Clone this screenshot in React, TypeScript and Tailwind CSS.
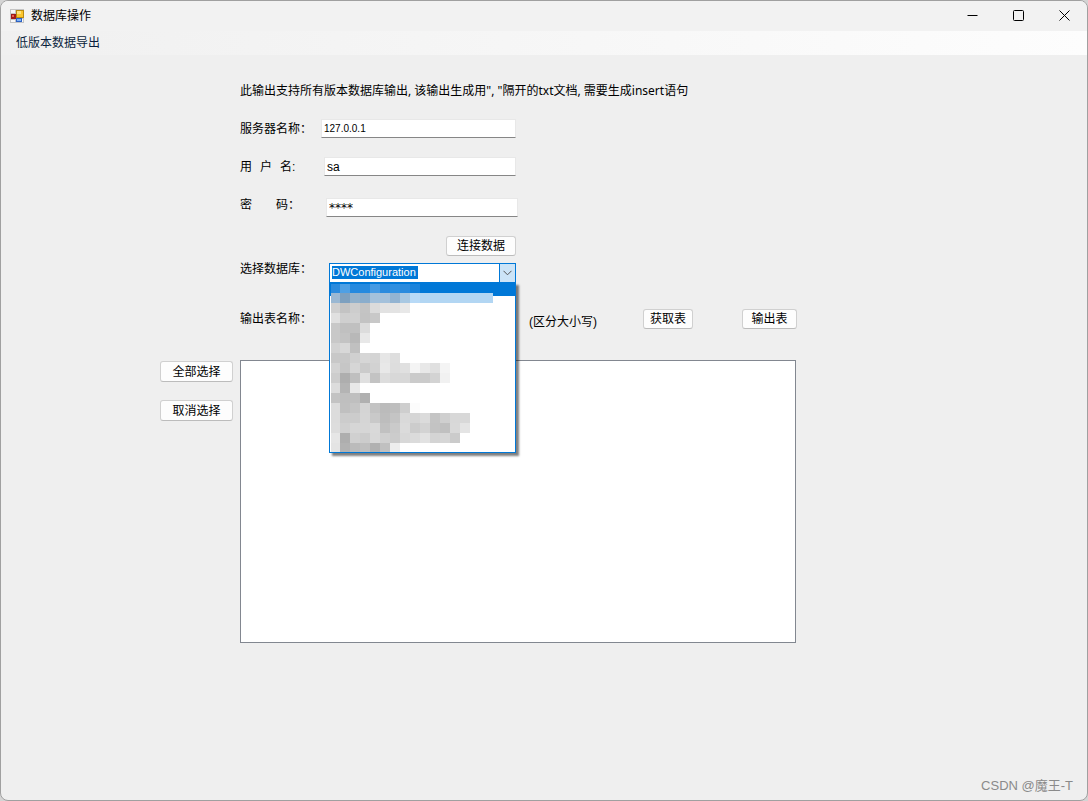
import { useState } from 'react';

const CELL = 10;

// blurred database names, one array per row of the drop down list
const mosaicRows: string[][] = [
  ['#2b8bdd', '#4fa0e4', '#258adf', '#258adf', '#459ae3', '#2a8bde', '#3090e0', '#2a8bde', '#1b84dc'],
  ['#9ab8d3', '#7da0bf', '#92b1cb', '#8aadcc', '#a4c1db', '#a4c1db', '#93b4d2', '#a8c8e2', '#b8daf7'],
  ['#d0d0d0', '#c3c3c3', '#cdcdcd', '#c4c4c4', '#dbdbdb', '#e2e2e2', '#e3e3e3', '#e8e8e8'],
  ['#e0e0e0', '#cfcfcf', '#d0d0d0', '#c3c3c3', '#c8c8c8'],
  ['#c8c8c8', '#c0c0c0', '#c0c0c0', '#dcdcdc'],
  ['#c8c8c8', '#c3c3c3', '#b8b8b8', '#e8e8e8'],
  ['#d2d2d2', '#d8d8d8', '#c0c0c0'],
  ['#c8c8c8', '#c8c8c8', '#d0d0d0', '#d6d6d6', '#d4d4d4', '#e6e6e6', '#dedede'],
  ['#d3d3d3', '#c6c6c6', '#d6d6d6', '#cbcbcb', '#d2d2d2', '#e8e8e8', '#dddddd', '#e0e0e0', '#f4f4f4', '#e8e8e8', '#e0e0e0', '#f4f4f4'],
  ['#cdcdcd', '#aeaeae', '#bfbfbf', '#e0e0e0', '#c3c3c3', '#dddddd', '#d8d8d8', '#d8d8d8', '#cbcbcb', '#cbcbcb', '#d3d3d3', '#f1f1f1'],
  ['#dcdcdc', '#b4b4b4', '#e8e8e8'],
  ['#c3c3c3', '#bfbfbf', '#bfbfbf', '#b0b0b0'],
  ['#dcdcdc', '#c0c0c0', '#c5c5c5', '#d4d4d4', '#c3c3c3', '#bbbbbb', '#bebebe', '#cecece', '#fcfcfc'],
  ['#dcdcdc', '#cccccc', '#cccccc', '#d5d5d5', '#c9c9c9', '#bdbdbd', '#c4c4c4', '#d9d9d9', '#d5d5d5', '#dbdbdb', '#c4c4c4', '#cfcfcf', '#d8d8d8', '#d8d8d8'],
  ['#dddddd', '#d0d0d0', '#d6d6d6', '#d6d6d6', '#d9d9d9', '#c1c1c1', '#cacaca', '#dbdbdb', '#cccccc', '#d3d3d3', '#c3c3c3', '#c0c0c0', '#d9d9d9', '#e4e4e4'],
  ['#e6e6e6', '#aeaeae', '#d0d0d0', '#cccccc', '#d8d8d8', '#d0d0d0', '#cccccc', '#d8d8d8', '#dbdbdb', '#e2e2e2', '#d4d4d4', '#d6d6d6', '#cbcbcb'],
  ['#e4e4e4', '#b2b2b2', '#bbbbbb', '#bfbfbf', '#b1b1b1', '#c0c0c0', '#eeeeee'],
];

const buttonClass =
  'shrink-0 rounded-[3px] border border-[#d0d0d0] border-b-[#bcbcbc] bg-[#fdfdfd] text-center leading-4 hover:bg-[#e0eef9]';
const inputClass =
  'h-[19px] border border-[#e8e8e8] border-b-[#868686] bg-white px-[2px] leading-4 outline-none';

function AppIcon() {
  return (
    <svg width="14" height="14" viewBox="0 0 14 14" shapeRendering="crispEdges">
      <rect width="14" height="14" fill="#c4c4c4" />
      <path d="M1 1h4v3H1zM1 11h4v2H1zM12 10h1v3h-1z" fill="#f8f8f8" />
      <rect x="6" y="1" width="8" height="8" fill="#b98a12" />
      <rect x="7" y="2" width="6" height="6" fill="#fbc52c" />
      <rect x="7" y="2" width="4" height="3" fill="#ffe27a" />
      <rect x="1" y="5" width="5" height="5" fill="#a01818" />
      <rect x="2" y="6" width="2" height="2" fill="#e8604c" />
      <rect x="6" y="9" width="6" height="4" fill="#2d62c4" />
      <rect x="7" y="10" width="4" height="2" fill="#7fb2f5" />
    </svg>
  );
}

function BlurredNames() {
  return (
    <svg className="absolute left-px top-px" width="184" height="168" viewBox="1 1 184 168" shapeRendering="crispEdges">
      <rect x="0" y="10" width="163" height="10" fill="#b2d6f3" />
      {mosaicRows.map((row, y) =>
        row.map((color, x) => (
          <rect key={`${x}-${y}`} x={x * CELL} y={y * CELL} width={CELL} height={CELL} fill={color} />
        ))
      )}
    </svg>
  );
}

function DatabaseSelect() {
  const [open, setOpen] = useState(true);

  return (
    <div className="relative mt-[2px] w-[187px]">
      <div className="flex h-5 border border-[#0078d7] bg-white">
        <select
          id="database"
          defaultValue="DWConfiguration"
          className="min-w-0 flex-1 appearance-none bg-[linear-gradient(#0078d7,#0078d7)] bg-[length:86px_13px] bg-[position:2px_2px] bg-no-repeat px-[2px] pb-[2px] text-[11px] leading-4 text-white outline-none"
        >
          <option>DWConfiguration</option>
        </select>
        <button
          type="button"
          aria-label="展开"
          onClick={() => setOpen(!open)}
          className="flex w-4 items-center justify-center border-l border-[#0078d7] bg-[#cce4f7]"
        >
          <svg width="9" height="6" viewBox="0 0 9 6" fill="none" stroke="#555">
            <path d="M0.5 0.8L4.5 4.8L8.5 0.8" />
          </svg>
        </button>
      </div>
      {open && (
        <div className="absolute left-0 top-[19px] z-10 w-full bg-[#0078d7] p-px shadow-[3px_3px_2px_rgba(0,0,0,0.5)]">
          <div className="relative h-[169px] bg-white">
            <div className="h-[13px] bg-[#0078d7]" />
            <BlurredNames />
          </div>
        </div>
      )}
    </div>
  );
}

export default function App() {
  const [server, setServer] = useState('127.0.0.1');
  const [user, setUser] = useState('sa');
  const [password, setPassword] = useState('****');
  const [output, setOutput] = useState('');

  return (
    <div className="min-h-screen bg-[#d4d4d4] font-['Liberation_Sans','Noto_Sans_CJK_SC',sans-serif] text-xs text-black">
      <div className="flex min-h-screen flex-col overflow-hidden rounded-lg border border-[#a0a0a0] bg-[#efefef]">
        <header className="flex h-[30px] items-center bg-[#f2f2f2] pl-[9px]">
          <AppIcon />
          <h1 className="ml-[7px] flex-1">数据库操作</h1>
          <button type="button" aria-label="最小化" className="flex h-full w-[45px] items-center justify-center pb-px">
            <svg width="11" height="11" viewBox="0 0 11 11" stroke="#000">
              <path d="M0.5 5.5H10.5" />
            </svg>
          </button>
          <button type="button" aria-label="最大化" className="flex h-full w-[46px] items-center justify-center pb-px">
            <svg width="11" height="11" viewBox="0 0 11 11" fill="none" stroke="#000">
              <rect x="0.5" y="0.5" width="10" height="10" rx="1" />
            </svg>
          </button>
          <button type="button" aria-label="关闭" className="flex h-full w-[46px] items-center justify-center pb-px">
            <svg width="11" height="11" viewBox="0 0 11 11" stroke="#000">
              <path d="M0.5 0.5L10.5 10.5M10.5 0.5L0.5 10.5" />
            </svg>
          </button>
        </header>

        <nav className="flex h-6 items-center bg-linear-to-r from-[#f0f0f0] to-[#fdfdfd] pl-[15px]">
          <button type="button" className="text-[#0a1e3c]">低版本数据导出</button>
        </nav>

        <main className="pl-[159px] pt-7">
          <form className="ml-20" onSubmit={e => e.preventDefault()}>
            <p className="font-['Noto_Sans','Noto_Sans_CJK_SC',sans-serif] leading-4">
              此输出支持所有版本数据库输出, 该输出生成用", "隔开的txt文档, 需要生成insert语句
            </p>

            <div className="mt-5 flex h-[19px]">
              <label htmlFor="server" className="w-[81px] leading-[21px]">服务器名称：</label>
              <input
                id="server"
                value={server}
                onChange={e => setServer(e.target.value)}
                className={`${inputClass} w-[195px] text-[10px]`}
              />
            </div>

            <div className="mt-[19px] flex h-[19px]">
              <label htmlFor="user" className="flex w-[84px] gap-2 leading-[21px]">
                <span>用</span>
                <span>户</span>
                <span>名:</span>
              </label>
              <input id="user" value={user} onChange={e => setUser(e.target.value)} className={`${inputClass} w-[192px]`} />
            </div>

            <div className="mt-[19px] flex h-[22px] items-end">
              <label htmlFor="password" className="flex w-[86px] gap-6 self-start leading-[21px]">
                <span>密</span>
                <span>码：</span>
              </label>
              <input
                id="password"
                value={password}
                onChange={e => setPassword(e.target.value)}
                className={`${inputClass} w-[192px] font-['DejaVu_Sans',sans-serif]`}
              />
            </div>

            <div className="mt-[19px] flex w-[276px] justify-end">
              <button type="button" className={`${buttonClass} h-5 w-[70px]`}>连接数据</button>
            </div>

            <div className="mt-[5px] flex">
              <label htmlFor="database" className="w-[89px] leading-4">选择数据库：</label>
              <DatabaseSelect />
            </div>

            <div className="mt-[26px] flex items-start">
              <span className="w-[289px] leading-5">输出表名称：</span>
              <span className="w-[114px] pt-1 leading-[18px]">(区分大小写)</span>
              <button type="button" className={`${buttonClass} h-5 w-[50px]`}>获取表</button>
              <button type="button" className={`${buttonClass} ml-[49px] h-5 w-[55px]`}>输出表</button>
            </div>
          </form>

          <div className="mt-[29px] flex gap-[7px]">
            <div className="flex flex-col gap-[18px] pt-px">
              <button type="button" className={`${buttonClass} h-[21px] w-[73px]`}>全部选择</button>
              <button type="button" className={`${buttonClass} h-[21px] w-[73px]`}>取消选择</button>
            </div>
            <textarea
              aria-label="输出"
              value={output}
              onChange={e => setOutput(e.target.value)}
              className="h-[283px] max-w-[556px] flex-1 resize-none border border-[#828790] bg-white p-1 outline-none"
            />
          </div>
        </main>

        <footer className="mt-auto pb-[6px] pr-[14px] text-right text-[13px] text-[#8a8a8a]">CSDN @魔王-T</footer>
      </div>
    </div>
  );
}
